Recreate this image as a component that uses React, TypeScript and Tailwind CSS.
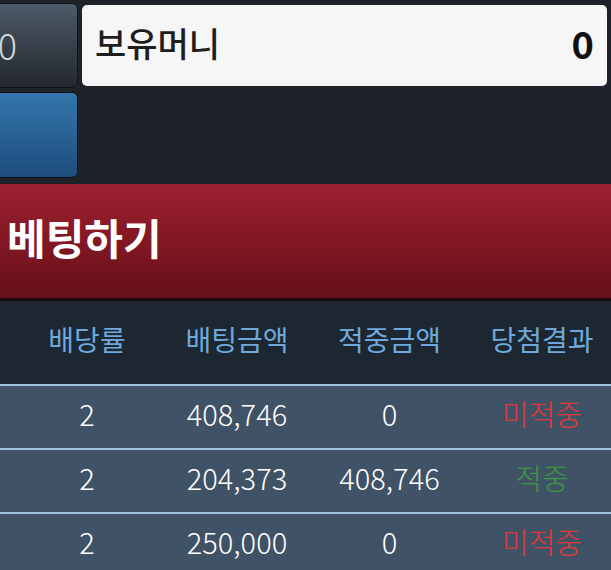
import React from "react";

const rows = [
  { rate: "2", bet: "408,746", win: "0", result: "미적중", ok: false },
  { rate: "2", bet: "204,373", win: "408,746", result: "적중", ok: true },
  { rate: "2", bet: "250,000", win: "0", result: "미적중", ok: false },
];

export default function App() {
  return (
    <div
      className="w-[611px] h-[570px] overflow-hidden bg-[#1e2329]"
      style={{ fontFamily: '"Noto Sans CJK KR", "Noto Sans", sans-serif' }}
    >
      <div className="flex gap-[4px] pt-[3px] ml-[-102px] mr-[4px]">
        <div className="flex flex-col gap-[4px] w-[180px] shrink-0">
          <div className="h-[85px] rounded-[6px] border border-[#0f1216] bg-gradient-to-b from-[#4d5b69] to-[#23282e] flex items-center justify-end pr-[60px]">
            <span className="text-[36px] font-light leading-none text-[#d3d7db] mt-[-4px]">0</span>
          </div>
          <div className="h-[86px] rounded-[6px] border border-[#0f1216] bg-gradient-to-b from-[#3476ad] to-[#1e4d7d]" />
        </div>
        <div className="flex-1 self-start mt-[2px] h-[81px] rounded-[5px] bg-[#f6f6f6] flex items-center justify-between pl-[13px] pr-[13px]">
          <span className="text-[34px] font-medium leading-none text-[#1e1e1e] mt-[-6px]">보유머니</span>
          <span className="text-[38px] font-bold leading-none text-[#111] mt-[-6px]">0</span>
        </div>
      </div>

      <div className="mt-[6px] h-[117px] bg-gradient-to-b from-[#9e202f] to-[#661019] border-b-[3px] border-[#1a0a0c] flex items-center pl-[7px]">
        <span className="text-[42px] font-bold leading-none text-white mt-[-8px]">베팅하기</span>
      </div>

      <div className="ml-[-135px] w-[760px]">
        <div className="h-[83px] bg-[#1d2731] flex items-center text-[28px] leading-none text-[#6ea8dc]">
          <div className="w-[147px] shrink-0 text-center whitespace-nowrap pr-[10px] mt-[-7px]">배팅선택픽</div>
          <div className="w-[150px] shrink-0 text-center mt-[-7px]">배당률</div>
          <div className="w-[150px] shrink-0 text-center mt-[-7px]">배팅금액</div>
          <div className="w-[155px] shrink-0 text-center mt-[-7px]">적중금액</div>
          <div className="w-[150px] shrink-0 text-center mt-[-7px]">당첨결과</div>
        </div>
        {rows.map((r, i) => (
          <div
            key={i}
            className="h-[64px] bg-[#3f5266] border-t-[2px] border-[#9ec3dc] flex items-center text-[29px] font-light leading-none text-white"
          >
            <div className="w-[147px] shrink-0 text-center"></div>
            <div className="w-[150px] shrink-0 text-center mt-[-7px]">{r.rate}</div>
            <div className="w-[150px] shrink-0 text-center mt-[-7px]">{r.bet}</div>
            <div className="w-[155px] shrink-0 text-center mt-[-7px]">{r.win}</div>
            <div
              className={
                "w-[150px] shrink-0 text-center mt-[-7px] " +
                (r.ok ? "text-[#3c9a3c]" : "text-[#e0393a]")
              }
            >
              {r.result}
            </div>
          </div>
        ))}
      </div>
    </div>
  );
}
